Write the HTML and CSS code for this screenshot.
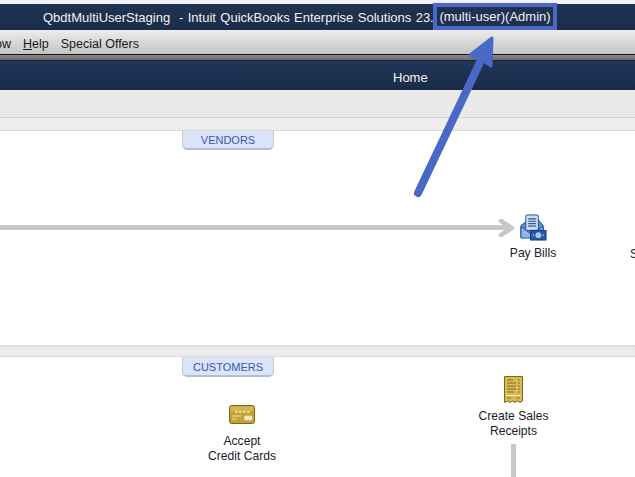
FILE: index.html
```html
<!DOCTYPE html>
<html lang="en">
<head>
<meta charset="utf-8">
<title>QuickBooks Home</title>
<link rel="stylesheet" href="styles.css">
</head>
<body>
<div class="app">
  <div class="topstrip"></div>
  <header class="titlebar"><span class="title-text">QbdtMultiUserStaging&nbsp; - Intuit QuickBooks Enterprise Solutions 23.</span></header>
  <nav class="menubar"><span class="menu-cut">ow</span><span class="menu-item"><u>H</u>elp</span><span class="menu-item">Special Offers</span></nav>
  <div class="divider"></div>
  <div class="homebar"><span class="home-title">Home</span></div>
  <div class="toolbar"></div>
  <div class="subbar"></div>
  <section class="flow vendors">
    <div class="tab tab-vendors">VENDORS</div>
    <div class="hline"></div>
    <svg class="line-head" width="20" height="20" viewBox="0 0 20 20"><path d="M3 3 L14 10 L3 17" fill="none" stroke="#c8c8c8" stroke-width="4.5" stroke-linejoin="round" stroke-linecap="round"/></svg>
    <div class="node node-paybills">
      <svg class="icon" width="27" height="27" viewBox="0 0 28 28">
        <path d="M1 12 L9 6 L19 6 L24 12 L24 24 L1 24 Z" fill="#5d8fd6" stroke="#1f4a8e"/>
        <rect x="6" y="1" width="13" height="16" rx="1" fill="#cfdcf0" stroke="#274f92"/>
        <path d="M8.500 5h8M8.500 7.500h8M8.500 10h8M8.500 12.500h8" stroke="#2b5596" stroke-width="1.200"/>
        <path d="M1 13 L12 21 L24 13 L24 25 L1 25 Z" fill="#8fb6e8" stroke="#1f4a8e"/>
        <rect x="11" y="17" width="16" height="10" fill="#2a5aa6" stroke="#143a78"/>
        <circle cx="19" cy="22" r="3" fill="#a9c6ee"/>
        <path d="M13.500 22h1M23.500 22h1" stroke="#a9c6ee" stroke-width="2"/>
      </svg>
      <span class="label">Pay Bills</span>
    </div>
    <span class="cut-label">S</span>
  </section>
  <div class="separator"></div>
  <section class="flow customers">
    <div class="tab tab-customers">CUSTOMERS</div>
    <div class="node node-cards">
      <svg class="icon" width="26" height="19" viewBox="0 0 26 19">
        <rect x="0.500" y="0.500" width="25" height="18" rx="2" fill="#c2a135" stroke="#7d6518"/>
        <rect x="1.500" y="1.500" width="23" height="5" fill="#d2b653"/>
        <path d="M6 7h2.500M10 7h2.500M14 7h2.500M18 7h2.500" stroke="#f6eecb" stroke-width="1.500"/>
        <path d="M3 11h9M3 14h5" stroke="#ecdfa8"/>
        <circle cx="17.500" cy="13" r="2.500" fill="#f1e7bd"/>
        <circle cx="21" cy="13" r="2.500" fill="#f1e7bd"/>
      </svg>
      <span class="label">Accept<br>Credit Cards</span>
    </div>
    <div class="node node-receipts">
      <svg class="icon" width="19" height="27" viewBox="0 0 19 27">
        <path d="M0.500 0.500H18.500V25L16 26.500L13.500 25L11 26.500L8.500 25L6 26.500L3.500 25L0.500 26.500Z" fill="#d8bb55" stroke="#7d6518"/>
        <path d="M3 4h6M3 7h9M3 10h9M3 13h9M3 16h7" stroke="#7f6c24"/>
        <path d="M14 4h2M14 7h2M14 10h2M14 13h2M14 16h2" stroke="#8b7730"/>
        <path d="M2 19.500h15" stroke="#f3e7b0"/>
        <path d="M3 22h4M12 22h4" stroke="#8b7730"/>
      </svg>
      <span class="label">Create Sales<br>Receipts</span>
    </div>
    <div class="vline"></div>
  </section>
  <div class="callout"><span class="callout-text">(multi-user)(Admin)</span></div>
  <svg class="arrow" width="110" height="170" viewBox="0 0 110 170">
    <path d="M7 161 L72 24" stroke="#4a69c6" stroke-width="8" stroke-linecap="round" fill="none"/>
    <path d="M81 6 L59 23 L70 27 L80 34 Z" fill="#4a69c6" stroke="#4a69c6" stroke-width="3" stroke-linejoin="round"/>
  </svg>
</div>
</body>
</html>
```
FILE: styles.css
```css
* { box-sizing: border-box; }
html, body { margin: 0; padding: 0; }
body { font-family: "Liberation Sans", Arial, sans-serif; background: #fff; overflow: hidden; }
.app { position: relative; width: 635px; height: 477px; overflow: hidden; }
.topstrip { height: 4px; background: #f0f0f8; }
.titlebar { height: 26px; padding-left: 43px; display: flex; align-items: center; color: #f2f2f2; font-size: 13px; white-space: nowrap; background: linear-gradient(#1f3352, #1b2d4a); }
.title-text { word-spacing: 0.800px; }
.menubar { height: 25px; padding-top: 4px; display: flex; align-items: center; gap: 12px; font-size: 12.500px; color: #1a1a1a; background: linear-gradient(#ededed, #c4c4c4); border-bottom: 1px solid #111; }
.menu-cut { margin-left: -5px; }
.divider { height: 6px; background: linear-gradient(#8a8a8a, #6a6a6a); border-bottom: 1px solid #222; }
.homebar { height: 29px; padding-left: 393px; padding-top: 4px; display: flex; align-items: center; color: #f4f4f4; font-size: 13px; background: linear-gradient(#20375a, #1a2b46); }
.toolbar { height: 28px; background: #e9e9e9; border-bottom: 1px solid #d0d0d0; }
.subbar { height: 13px; background: #eeeeee; border-bottom: 1px solid #d8d8d8; }
.flow { position: relative; background: #fff; }
.vendors { height: 214px; }
.separator { height: 12px; background: linear-gradient(#dcdcdc, #ececec 35%, #ececec 85%, #d8d8d8); }
.customers { height: 120px; }
.tab { position: absolute; left: 182px; top: 0; width: 92px; height: 20px; padding-top: 1px; display: flex; align-items: center; justify-content: center; font-size: 11px; color: #3a55b2; background: #dae5f9; border: 1px solid #c0c8d8; border-top: 0; border-bottom: 2px solid #b6bfd2; border-radius: 0 0 5px 5px; }
.tab-vendors { height: 19px; padding-top: 0; }
.hline { position: absolute; left: 0; top: 94px; width: 510px; height: 5px; background: #c8c8c8; }
.line-head { position: absolute; left: 498px; top: 87px; }
.node { position: absolute; display: flex; flex-direction: column; align-items: center; text-align: center; }
.icon { display: block; }
.label { font-size: 12.100px; line-height: 15px; color: #1a1a2a; white-space: nowrap; }
.node-paybills { left: 503px; top: 83px; width: 60px; }
.node-paybills .label { margin-top: 5px; }
.cut-label { position: absolute; left: 630px; top: 116px; font-size: 12px; line-height: 15px; color: #1a1a2a; }
.node-cards { left: 202px; top: 48px; width: 80px; }
.node-cards .label { margin-top: 10px; }
.node-receipts { left: 474px; top: 19px; width: 79px; }
.node-receipts .label { margin-top: 6px; }
.vline { position: absolute; left: 511px; top: 87px; width: 5px; height: 33px; background: #c8c8c8; }
.callout { position: absolute; left: 433px; top: 3px; width: 124px; height: 27px; border: 4px solid #4a69c6; background: #1f3050; display: flex; align-items: center; justify-content: center; }
.callout-text { color: #f2f2f2; font-size: 13px; white-space: nowrap; }
.arrow { position: absolute; left: 411px; top: 32px; }
```
